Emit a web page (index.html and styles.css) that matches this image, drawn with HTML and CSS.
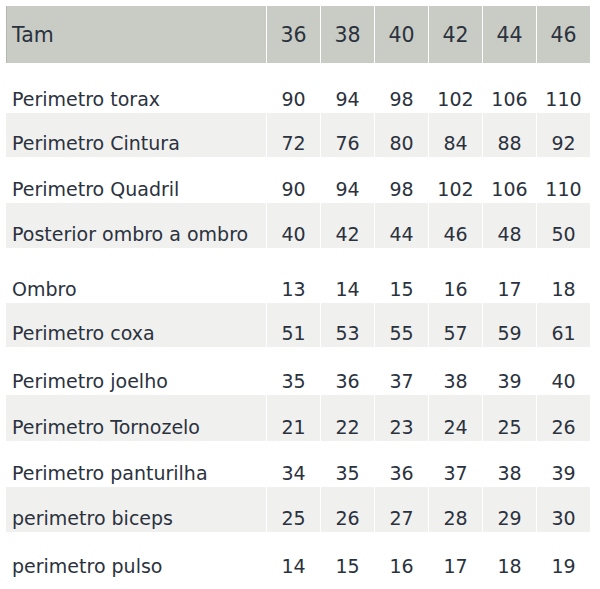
FILE: index.html
```html
<!DOCTYPE html>
<html lang="pt">
<head>
<meta charset="utf-8">
<title>Tabela de medidas</title>
<link rel="stylesheet" href="styles.css">
</head>
<body>
<div class="table">
  <div class="row head"><div class="c name">Tam</div><div class="c">36</div><div class="c">38</div><div class="c">40</div><div class="c">42</div><div class="c">44</div><div class="c">46</div></div>
  <div class="row"><div class="c name">Perimetro torax</div><div class="c">90</div><div class="c">94</div><div class="c">98</div><div class="c">102</div><div class="c">106</div><div class="c">110</div></div>
  <div class="row alt"><div class="c name">Perimetro Cintura</div><div class="c">72</div><div class="c">76</div><div class="c">80</div><div class="c">84</div><div class="c">88</div><div class="c">92</div></div>
  <div class="row"><div class="c name">Perimetro Quadril</div><div class="c">90</div><div class="c">94</div><div class="c">98</div><div class="c">102</div><div class="c">106</div><div class="c">110</div></div>
  <div class="row alt"><div class="c name">Posterior ombro a ombro</div><div class="c">40</div><div class="c">42</div><div class="c">44</div><div class="c">46</div><div class="c">48</div><div class="c">50</div></div>
  <div class="row"><div class="c name">Ombro</div><div class="c">13</div><div class="c">14</div><div class="c">15</div><div class="c">16</div><div class="c">17</div><div class="c">18</div></div>
  <div class="row alt"><div class="c name">Perimetro coxa</div><div class="c">51</div><div class="c">53</div><div class="c">55</div><div class="c">57</div><div class="c">59</div><div class="c">61</div></div>
  <div class="row"><div class="c name">Perimetro joelho</div><div class="c">35</div><div class="c">36</div><div class="c">37</div><div class="c">38</div><div class="c">39</div><div class="c">40</div></div>
  <div class="row alt"><div class="c name">Perimetro Tornozelo</div><div class="c">21</div><div class="c">22</div><div class="c">23</div><div class="c">24</div><div class="c">25</div><div class="c">26</div></div>
  <div class="row"><div class="c name">Perimetro panturilha</div><div class="c">34</div><div class="c">35</div><div class="c">36</div><div class="c">37</div><div class="c">38</div><div class="c">39</div></div>
  <div class="row alt"><div class="c name">perimetro biceps</div><div class="c">25</div><div class="c">26</div><div class="c">27</div><div class="c">28</div><div class="c">29</div><div class="c">30</div></div>
  <div class="row"><div class="c name">perimetro pulso</div><div class="c">14</div><div class="c">15</div><div class="c">16</div><div class="c">17</div><div class="c">18</div><div class="c">19</div></div>
</div>
</body>
</html>
```
FILE: styles.css
```css
html, body {
  margin: 0;
  padding: 0;
  background: #ffffff;
}
body {
  font-family: "DejaVu Sans", "Liberation Sans", sans-serif;
  font-size: 19px;
  color: #2b323d;
}
.table {
  margin: 6px 0 0 6px;
  width: 584px;
}
.row {
  display: grid;
  grid-template-columns: 260px repeat(6, 1fr);
  column-gap: 1px;
  height: 46px;
}
.c {
  display: flex;
  align-items: flex-end;
  justify-content: center;
  line-height: 20px;
  padding-bottom: 4px;
  white-space: nowrap;
}
.c.name {
  justify-content: flex-start;
  padding-left: 6px;
}
.alt .c {
  background: #f0f0ef;
}
.head .c {
  background: #c9ccc5;
  align-items: center;
  padding-bottom: 0;
  padding-top: 1px;
  font-size: 20.5px;
}
.head .c.name {
  box-shadow: inset 1px 0 0 #b5b8b1;
}
.row:nth-child(1) { height: 57px; }
.row:nth-child(2) { height: 50px; }
.row:nth-child(3) { height: 44px; }
.row:nth-child(4) { height: 46px; }
.row:nth-child(5) { height: 45px; }
.row:nth-child(6) { height: 55px; }
.row:nth-child(7) { height: 44px; }
.row:nth-child(8) { height: 48px; }
.row:nth-child(9) { height: 46px; }
.row:nth-child(10) { height: 46px; }
.row:nth-child(11) { height: 45px; }
.row:nth-child(12) { height: 48px; }
```
